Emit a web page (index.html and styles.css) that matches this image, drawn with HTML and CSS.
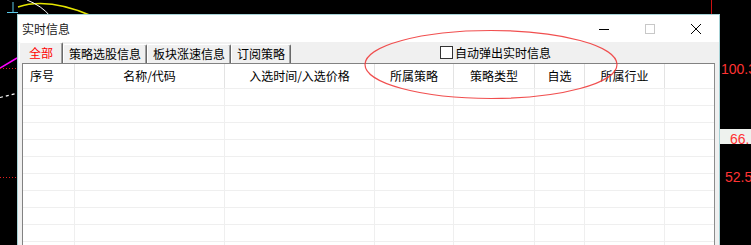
FILE: index.html
```html
<!DOCTYPE html>
<html lang="zh-CN">
<head>
<meta charset="utf-8">
<title>实时信息</title>
<link rel="stylesheet" href="styles.css">
</head>
<body>
<div class="screen">
  <svg class="chart" width="751" height="245" viewBox="0 0 751 245">
    <path d="M13 2 V12 M7 12.5 H18" stroke="#5ac8e8" stroke-width="1" fill="none"/>
    <path d="M18 7 Q48 -3 92 16" stroke="#e6e600" stroke-width="1.5" fill="none"/>
    <path d="M27 0 Q42 6 50 16" stroke="#ffffff" stroke-width="1" fill="none"/>
    <path d="M0 68 L17 58" stroke="#ff00ff" stroke-width="1.5"/>
    <path d="M0 68.5 H17" stroke="#e02020" stroke-width="1" stroke-dasharray="1 2"/>
    <path d="M0 177.5 H17" stroke="#e02020" stroke-width="1" stroke-dasharray="1 2"/>
    <path d="M0 97.5 L16 93.5" stroke="#ffffff" stroke-width="1.2" stroke-dasharray="3 3"/>
    <path d="M711.5 0 V14" stroke="#cc1010" stroke-width="1"/>
    <text class="num" x="721" y="74">100.3</text>
    <rect x="720" y="129" width="31" height="15" fill="#eef2ee"/>
    <text class="num" x="730" y="143.5">66.</text>
    <text class="num" x="725" y="182">52.5</text>
  </svg>

  <div class="window">
    <div class="titlebar">
      <span class="title">实时信息</span>
      <div class="controls">
        <span class="ctl"><svg width="10" height="10" viewBox="0 0 10 10"><path d="M0 5.5 H10" stroke="#000" stroke-width="1"/></svg></span>
        <span class="ctl"><svg width="10" height="10" viewBox="0 0 10 10"><rect x="0.5" y="0.5" width="9" height="9" fill="none" stroke="#c8c8c8" stroke-width="1"/></svg></span>
        <span class="ctl"><svg width="10" height="10" viewBox="0 0 10 10"><path d="M0 0 L10 10 M10 0 L0 10" stroke="#000" stroke-width="1"/></svg></span>
      </div>
    </div>
    <div class="client">
      <div class="tabs">
        <div class="tab active">全部</div>
        <div class="tab">策略选股信息</div>
        <div class="tab">板块涨速信息</div>
        <div class="tab">订阅策略</div>
        <label class="autopop"><span class="box"></span>自动弹出实时信息</label>
      </div>
      <div class="list">
        <div class="row head">
          <div class="c c1 first">序号</div>
          <div class="c c2">名称/代码</div>
          <div class="c c3">入选时间/入选价格</div>
          <div class="c c4">所属策略</div>
          <div class="c c5">策略类型</div>
          <div class="c c6">自选</div>
          <div class="c c7">所属行业</div>
          <div class="c c8"></div>
        </div>
        <div class="row"><div class="c c1"></div><div class="c c2"></div><div class="c c3"></div><div class="c c4"></div><div class="c c5"></div><div class="c c6"></div><div class="c c7"></div><div class="c c8"></div></div>
        <div class="row"><div class="c c1"></div><div class="c c2"></div><div class="c c3"></div><div class="c c4"></div><div class="c c5"></div><div class="c c6"></div><div class="c c7"></div><div class="c c8"></div></div>
        <div class="row"><div class="c c1"></div><div class="c c2"></div><div class="c c3"></div><div class="c c4"></div><div class="c c5"></div><div class="c c6"></div><div class="c c7"></div><div class="c c8"></div></div>
        <div class="row"><div class="c c1"></div><div class="c c2"></div><div class="c c3"></div><div class="c c4"></div><div class="c c5"></div><div class="c c6"></div><div class="c c7"></div><div class="c c8"></div></div>
        <div class="row"><div class="c c1"></div><div class="c c2"></div><div class="c c3"></div><div class="c c4"></div><div class="c c5"></div><div class="c c6"></div><div class="c c7"></div><div class="c c8"></div></div>
        <div class="row"><div class="c c1"></div><div class="c c2"></div><div class="c c3"></div><div class="c c4"></div><div class="c c5"></div><div class="c c6"></div><div class="c c7"></div><div class="c c8"></div></div>
        <div class="row"><div class="c c1"></div><div class="c c2"></div><div class="c c3"></div><div class="c c4"></div><div class="c c5"></div><div class="c c6"></div><div class="c c7"></div><div class="c c8"></div></div>
        <div class="row"><div class="c c1"></div><div class="c c2"></div><div class="c c3"></div><div class="c c4"></div><div class="c c5"></div><div class="c c6"></div><div class="c c7"></div><div class="c c8"></div></div>
        <div class="row"><div class="c c1"></div><div class="c c2"></div><div class="c c3"></div><div class="c c4"></div><div class="c c5"></div><div class="c c6"></div><div class="c c7"></div><div class="c c8"></div></div>
        <div class="row"><div class="c c1"></div><div class="c c2"></div><div class="c c3"></div><div class="c c4"></div><div class="c c5"></div><div class="c c6"></div><div class="c c7"></div><div class="c c8"></div></div>
      </div>
    </div>
  </div>

  <svg class="annot" width="751" height="245" viewBox="0 0 751 245">
    <ellipse cx="491" cy="64.5" rx="126" ry="34" fill="none" stroke="#f03c3c" stroke-width="1.2" stroke-opacity="0.9"/>
  </svg>
</div>
</body>
</html>
```

FILE: styles.css
```css
html, body {
  margin: 0;
  padding: 0;
  background: #000;
}

.screen {
  position: relative;
  width: 751px;
  height: 245px;
  overflow: hidden;
  background: #000;
  font-family: "Noto Sans CJK SC", "Liberation Sans", sans-serif;
  font-size: 12px;
  color: #000;
}

.chart {
  position: absolute;
  left: 0;
  top: 0;
}

.num {
  font-family: "Liberation Sans", Arial, sans-serif;
  font-size: 14px;
  fill: #ff3333;
}

.window {
  position: absolute;
  left: 17px;
  top: 14px;
  width: 703px;
  height: 240px;
  box-sizing: border-box;
  border: 1px solid #a6d2d6;
  background: #f0f0f0;
  display: flex;
  flex-direction: column;
}

.titlebar {
  height: 27px;
  flex: none;
  background: #fff;
  display: flex;
  align-items: center;
}

.title {
  padding-left: 4px;
  line-height: 27px;
  color: #1a1a1a;
}

.controls {
  margin-left: auto;
  display: flex;
  height: 100%;
}

.ctl {
  width: 46px;
  display: flex;
  align-items: center;
  justify-content: center;
}

.ctl svg {
  display: block;
}

.client {
  flex: 1;
  padding: 0 4px;
  display: flex;
  flex-direction: column;
  min-height: 0;
}

.tabs {
  height: 21px;
  flex: none;
  display: flex;
  align-items: flex-end;
  margin: 0 -4px;
  padding-left: 1px;
}

.tab {
  height: 19px;
  box-sizing: border-box;
  padding: 0 5px;
  border-top: 1px solid #fff;
  border-left: 1px solid #fff;
  border-right: 1px solid #696969;
  box-shadow: inset -1px 0 #a0a0a0;
  border-radius: 2px 2px 0 0;
  line-height: 18px;
  white-space: nowrap;
}

.tab.active {
  height: 21px;
  padding: 0 9px;
  color: #ff0000;
  line-height: 20px;
}

.autopop {
  display: flex;
  align-items: center;
  align-self: center;
  margin-left: 149px;
  line-height: 14px;
  white-space: nowrap;
}

.box {
  width: 13px;
  height: 13px;
  box-sizing: border-box;
  border: 1px solid #333;
  background: #fff;
  margin-right: 2px;
}

.list {
  flex: 1;
  background: #fff;
  border: 1px solid #828282;
  border-right-color: #8c8c8c;
  overflow: hidden;
}

.row {
  display: flex;
  height: 17px;
  box-sizing: border-box;
  border-bottom: 1px solid #efefef;
}

.row.head {
  height: 25px;
}

.c {
  flex: none;
  box-sizing: border-box;
  border-right: 1px solid #efefef;
  text-align: center;
  white-space: nowrap;
}

.head .c {
  line-height: 24px;
  border-right-color: #e3e3e3;
}

.head .first {
  text-align: left;
  padding-left: 7px;
}

.c1 { width: 52px; }
.c2 { width: 150px; }
.c3 { width: 150px; }
.c4 { width: 79px; }
.c5 { width: 81px; }
.c6 { width: 50px; }
.c7 { width: 80px; }
.c8 { flex: 1; border-right: none; }

.annot {
  position: absolute;
  left: 0;
  top: 0;
  pointer-events: none;
}
```
